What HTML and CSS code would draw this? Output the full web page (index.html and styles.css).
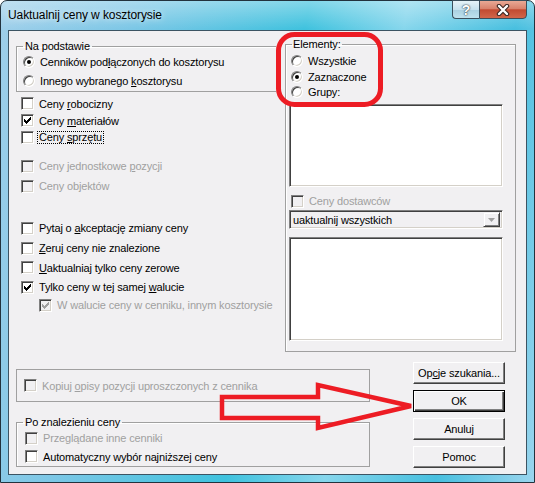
FILE: index.html
```html
<!DOCTYPE html>
<html lang="pl">
<head>
  <meta charset="UTF-8" />
  <title>Uaktualnij ceny w kosztorysie</title>
  <link rel="stylesheet" href="styles.css">
</head>
<body>
  <div class="window">
    <!-- TITLE BAR -->
    <div class="titlebar">
      <span class="title">Uaktualnij ceny w kosztorysie</span>
      <div class="caption">
        <span class="cap-btn help">?</span>
        <span class="cap-btn close">
          <svg width="14" height="12" viewBox="0 0 14 12">
            <path d="M3 2 L11 10 M11 2 L3 10" stroke="#3a2622" stroke-width="4.5" stroke-linecap="round"/>
            <path d="M3 2 L11 10 M11 2 L3 10" stroke="#fff" stroke-width="2.4" stroke-linecap="round"/>
          </svg>
        </span>
      </div>
    </div>

    <!-- DIALOG BODY -->
    <div class="client">
      <div class="top-row">
        <div class="left-col">
          <fieldset class="group basis">
            <legend>Na podstawie</legend>
            <div class="row h17"><span class="radio on"></span><span>Cenników pod<u>ł</u>ączonych do kosztorysu</span></div>
            <div class="row h17 gap2"><span class="radio"></span><span>Innego wybranego <u>k</u>osztorysu</span></div>
          </fieldset>

          <div class="row h17 gap3"><span class="cb"></span><span>Ceny <u>r</u>obocizny</span></div>
          <div class="row h17"><span class="cb"><svg class="tick" viewBox="0 0 7 7"><path d="M0 2H1V3H2V4H3V3H4V2H5V1H6V0H7V3H6V4H5V5H4V6H3V7H2V6H1V5H0Z"/></svg></span><span>Ceny <u>m</u>ateriałów</span></div>
          <div class="row h17"><span class="cb"></span><span class="focus">Ceny <u>s</u>przętu</span></div>

          <div class="row h20 gap10 dis"><span class="cb"></span><span>Ceny jednostkowe <u>p</u>ozycji</span></div>
          <div class="row h20 dis"><span class="cb"></span><span>Ceny ob<u>j</u>ektów</span></div>

          <div class="row h20 gap22"><span class="cb"></span><span>Pytaj o <u>a</u>kceptację zmiany ceny</span></div>
          <div class="row h20"><span class="cb"></span><span><u>Z</u>eruj ceny nie znalezione</span></div>
          <div class="row h19"><span class="cb"></span><span><u>U</u>aktualniaj tylko ceny zerowe</span></div>
          <div class="row h20"><span class="cb"><svg class="tick" viewBox="0 0 7 7"><path d="M0 2H1V3H2V4H3V3H4V2H5V1H6V0H7V3H6V4H5V5H4V6H3V7H2V6H1V5H0Z"/></svg></span><span>Tylko ceny w tej samej <u>w</u>alucie</span></div>
          <div class="row h16 sub dis"><span class="cb"><svg class="tick" viewBox="0 0 7 7"><path d="M0 2H1V3H2V4H3V3H4V2H5V1H6V0H7V3H6V4H5V5H4V6H3V7H2V6H1V5H0Z"/></svg></span><span>W walucie ceny w cenniku, innym kosztorysie</span></div>
        </div>

        <fieldset class="group elements">
          <legend>Elementy:</legend>
          <div class="row h16 gap2"><span class="radio"></span><span>Wszystkie</span></div>
          <div class="row h15"><span class="radio on"></span><span>Zaznaczone</span></div>
          <div class="row h16"><span class="radio"></span><span>Grupy:</span></div>
          <div class="listbox groups"></div>
          <div class="row h16 supp dis"><span class="cb"></span><span>Ceny dostawców</span></div>
          <div class="combo">
            <span>uaktualnij wszystkich</span>
            <span class="drop"><svg width="7" height="4" viewBox="0 0 7 4"><polygon points="0,0 7,0 3.5,4" fill="#a0a0a0"/></svg></span>
          </div>
          <div class="listbox suppliers"></div>
        </fieldset>
      </div>

      <div class="bottom-row">
        <div class="left-col">
          <div class="frame copy">
            <div class="row dis"><span class="cb"></span><span>Kopiuj <u>o</u>pisy pozycji uproszczonych z cennika</span></div>
          </div>
          <fieldset class="group found">
            <legend>Po znalezieniu ceny</legend>
            <div class="row h18 dis"><span class="cb"></span><span>Przeglądane inne cenniki</span></div>
            <div class="row h19"><span class="cb"></span><span>Automatyczny wybór najniższej ceny</span></div>
          </fieldset>
        </div>
        <div class="buttons">
          <div class="btn">Op<u>c</u>je szukania...</div>
          <div class="btn default">OK</div>
          <div class="btn">Anuluj</div>
          <div class="btn">Pomoc</div>
        </div>
      </div>
    </div>

    <!-- red annotation marks drawn over the dialog -->
    <svg class="annot" width="535" height="483" viewBox="0 0 535 483">
      <rect x="278.5" y="34.5" width="102" height="70" rx="16" fill="none" stroke="#ed1c24" stroke-width="5"/>
      <polygon points="222,397 318,397 318,385 411,406 318,428 318,418 222,418" fill="none" stroke="#ed1c24" stroke-width="4.5"/>
    </svg>
  </div>
</body>
</html>
```

FILE: styles.css
```css
* {margin: 0; padding: 0; box-sizing: border-box;}
body {
  font-family: "Liberation Sans", Arial, sans-serif;
  font-size: 11px;
  letter-spacing: -0.15px;
  color: #000;
  background: #fff;
}
u {text-decoration: underline; text-underline-offset: 1px;}

/* Window frame */
.window {
  position: relative;
  width: 535px; height: 483px;
  display: flex; flex-direction: column;
  border: 1px solid #22323d;
  border-radius: 7px 7px 0 0;
  background:
    linear-gradient(180deg, rgba(255,255,255,0.35) 0, rgba(255,255,255,0) 28px),
    linear-gradient(100deg, #9fcfea 0%, #7cc7e6 22%, #3fc2de 50%, #86d6ec 66%, #47bfdf 84%, #9ad5ee 100%);
}

.titlebar {height: 29px; display: flex; align-items: flex-start;}
.title {
  margin: 7px 0 0 7px;
  font-size: 12px; letter-spacing: -0.1px;
  text-shadow: 0 0 6px rgba(255,255,255,0.9);
}
.caption {margin: -1px 7px 0 auto; display: flex;}
.cap-btn {
  height: 19px; display: flex; align-items: center; justify-content: center;
  border: 1px solid #3a4f5c;
}
.cap-btn.help {
  width: 27px; border-right: none; border-radius: 0 0 0 4px;
  background: linear-gradient(180deg, #e6f3f8 0%, #c7e2ee 50%, #a9d0e0 51%, #bfe2ee 100%);
  color: #fff; font-weight: bold; font-size: 14px;
  text-shadow: 0 0 1px #2d3b45, 0 0 2px #2d3b45;
}
.cap-btn.close {
  width: 48px; border-radius: 0 0 4px 0;
  background: linear-gradient(180deg, #e9a995 0%, #d9826c 45%, #c24a31 52%, #d1664a 100%);
}

/* Client area */
.client {
  flex: 1;
  margin: 0 7px 7px 7px;
  border: 1px solid #3c5463;
  background: #f1f0f2;
  display: flex; flex-direction: column;
}
.top-row {display: flex; align-items: flex-start;}
.bottom-row {display: flex; align-items: flex-start;}
.left-col {width: 276px; padding-left: 7px; margin-top: 9px;}
.bottom-row .left-col {width: auto; margin-top: 17px;}

/* Group boxes */
.group {
  border: 1px solid #a0a0a0;
  box-shadow: 1px 1px 0 #fff inset;
}
.group legend {height: 13px; line-height: 13px; padding: 0 2px;}
.basis {width: 260px; border-right: none; padding: 0 0 2px 6px;}
.elements {width: 231px; margin-top: 7px; padding: 0 0 10px 3px;}
.elements legend {margin-left: 3px; padding: 0 1px;}
.found {width: 354px; margin-top: 14px; padding: 0 0 0 6px;}

.frame.copy {
  width: 354px; height: 33px;
  border: 1px solid #a0a0a0;
  display: flex; align-items: center;
  padding-left: 7px;
}

/* Rows */
.row {display: flex; align-items: center; gap: 5px; white-space: nowrap;}
.left-col > .row {padding-left: 5px;}
.left-col > .row.sub {padding-left: 23px;}
.elements .row {padding-left: 2px;}
.found .row {padding-left: 2px;}
.h15 {height: 15px;}
.h16 {height: 16px;}
.h17 {height: 17px;}
.h18 {height: 18px;}
.h19 {height: 19px;}
.h20 {height: 20px;}
.gap2 {margin-top: 2px;}
.gap3 {margin-top: 3px;}
.gap10 {margin-top: 10px;}
.gap22 {margin-top: 22px;}
.dis {color: #a0a0a0;}

.focus {border: 1px dotted #000; line-height: 11px; padding: 0 1px; margin-left: -2px;}

/* Checkbox / radio */
.cb {
  width: 13px; height: 13px; flex: none;
  display: flex; align-items: center; justify-content: center;
  background: #fff;
  border: 1px solid; border-color: #808080 #fff #fff #808080;
  box-shadow: inset 1px 1px #404040, inset -1px -1px #d4d0c8;
}
.dis .cb {background: #f1f0f2;}
.tick {width: 7px; height: 7px; fill: #000; shape-rendering: crispEdges;}
.dis .tick {fill: #a0a0a0;}

.radio {
  width: 12px; height: 12px; flex: none; border-radius: 50%;
  display: flex; align-items: center; justify-content: center;
  background: #fff;
  border: 1px solid; border-color: #808080 #fff #fff #808080;
  box-shadow: inset 1px 1px #404040, inset -1px -1px #d4d0c8;
}
.radio.on::after {content: ""; width: 4px; height: 4px; border-radius: 50%; background: #000;}

/* Lists and combo */
.listbox {
  width: 214px; background: #fff;
  border: 1px solid; border-color: #808080 #fff #fff #808080;
  box-shadow: inset 1px 1px #404040, inset -1px -1px #d4d0c8;
}
.listbox.groups {height: 83px; margin-top: 4px;}
.listbox.suppliers {height: 104px; margin-top: 8px;}
.supp {margin-top: 6px;}
.combo {
  width: 214px; height: 19px; margin-top: 1px;
  display: flex; align-items: center; justify-content: space-between;
  padding: 0 2px 0 3px;
  background: #f1f0f2;
  border: 1px solid; border-color: #808080 #fff #fff #808080;
  box-shadow: inset 1px 1px #404040, inset -1px -1px #d4d0c8;
}
.drop {
  width: 17px; height: 15px;
  display: flex; align-items: center; justify-content: center;
  border: 1px solid; border-color: #f1f0f2 #404040 #404040 #f1f0f2;
  box-shadow: inset 1px 1px #fff, inset -1px -1px #808080;
}

/* Buttons */
.buttons {margin: 10px 21px 0 auto; width: 92px; display: flex; flex-direction: column; gap: 6px;}
.btn {
  height: 22px;
  display: flex; align-items: center; justify-content: center;
  background: #f1f0f2;
  border: 1px solid; border-color: #fff #404040 #404040 #fff;
  box-shadow: inset -1px -1px #808080;
}
.btn.default {
  border-color: #000;
  box-shadow: inset 1px 1px #fff, inset -1px -1px #404040, inset -2px -2px #808080;
}

/* Annotation overlay */
.annot {position: absolute; left: -1px; top: -1px; pointer-events: none;}
```
